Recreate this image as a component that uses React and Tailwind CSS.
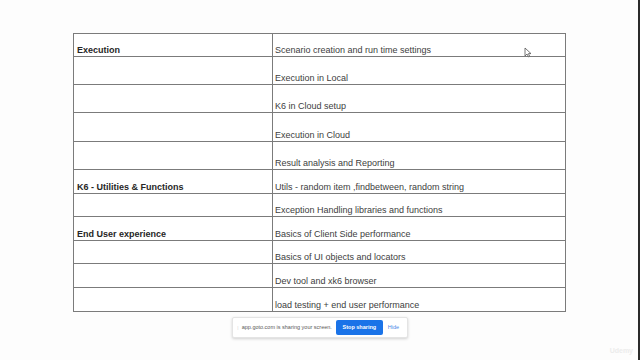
import React from 'react';

const rows = [
    { h: 'h-[23px]', left: 'Execution', right: 'Scenario creation and run time settings' },
    { h: 'h-[28px]', left: '', right: 'Execution in Local' },
    { h: 'h-[28px]', left: '', right: 'K6 in Cloud setup' },
    { h: 'h-[29px]', left: '', right: 'Execution in Cloud' },
    { h: 'h-[28px]', left: '', right: 'Result analysis and Reporting' },
    { h: 'h-[24px]', left: 'K6 - Utilities & Functions', right: 'Utils - random item ,findbetween, random string' },
    { h: 'h-[23px]', left: '', right: 'Exception Handling libraries and functions' },
    { h: 'h-[24px]', left: 'End User experience', right: 'Basics of Client Side performance' },
    { h: 'h-[23px]', left: '', right: 'Basics of UI objects and locators' },
    { h: 'h-[24px]', left: '', right: 'Dev tool and xk6 browser' },
    { h: 'h-[23px]', left: '', right: 'load testing + end user performance' },
];

const Cursor = () => (
    <svg className="absolute left-[524px] top-[47px]" width="8" height="11" viewBox="0 0 8 11">
        <path d="M1 1 L1 9 L3 7 L4.6 10 L5.8 9.4 L4.4 6.6 L7 6.6 Z" fill="#fff" stroke="#555" strokeWidth="0.8" strokeLinejoin="round" />
    </svg>
);

const App = () => {
    return (
        <div
            className="relative w-[640px] h-[360px] overflow-hidden bg-[#fdfdfd] border-r-2 border-[#2b2b2b] flex flex-col"
            style={{ fontFamily: '"Liberation Sans", Arial, sans-serif' }}
        >
            {/* Course outline table */}
            <div className="ml-[73px] mt-[33px] w-[493px] border border-[#7b7b7b] bg-white">
                {rows.map((row, i) => (
                    <div
                        key={i}
                        className={`flex ${row.h} ${i < rows.length - 1 ? 'border-b border-[#7b7b7b]' : ''}`}
                    >
                        <div className="w-[199px] border-r border-[#7b7b7b] flex items-end pl-[3px] pb-[1px]">
                            <span className="text-[9px] leading-[10px] font-bold text-[#262626]">{row.left}</span>
                        </div>
                        <div className="flex-1 flex items-end pl-[2px] pb-[1px]">
                            <span className="text-[9px] leading-[10px] text-[#404040]">{row.right}</span>
                        </div>
                    </div>
                ))}
            </div>

            {/* Screen sharing notice */}
            <div className="mt-[5px] self-center ml-[2px] w-[176px] h-[21px] bg-white border border-[#e4e4e4] rounded-[2px] shadow-[0_1px_3px_rgba(0,0,0,0.18)] flex items-center">
                <span className="ml-[4px] text-[6px] leading-none text-[#c4c4c4]">⁞</span>
                <span className="ml-[3px] text-[5.5px] leading-none text-[#5a5a5a] whitespace-nowrap">app.goto.com is sharing your screen.</span>
                <div className="ml-[4px] w-[47px] h-[15px] rounded-[2px] bg-[#1a73e8] flex items-center justify-center">
                    <span className="text-[5.5px] leading-none font-bold text-white">Stop sharing</span>
                </div>
                <span className="ml-[5px] text-[5.5px] leading-none text-[#4a8ae8]">Hide</span>
            </div>

            <Cursor />

            {/* Watermark */}
            <span className="absolute right-[5px] bottom-[4px] text-[7px] font-bold text-[#ececec]">Udemy</span>
        </div>
    );
};

export default App;
